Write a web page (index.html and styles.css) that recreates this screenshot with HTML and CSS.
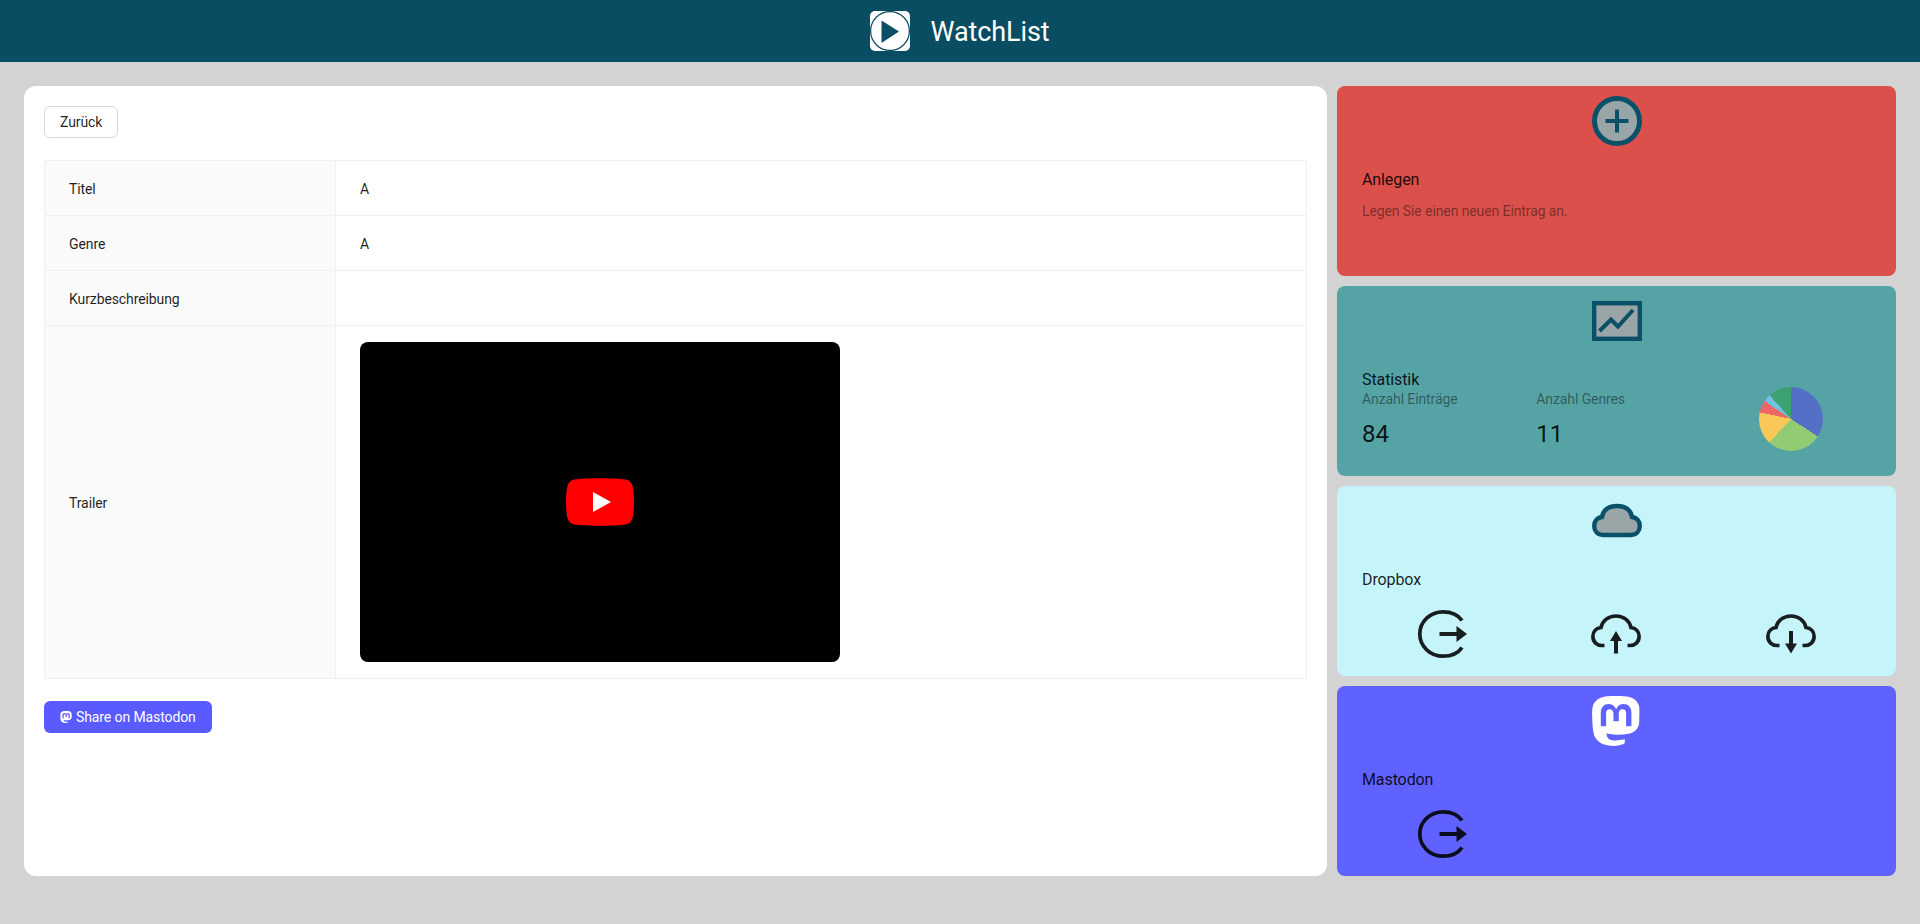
FILE: index.html
```html
<!DOCTYPE html>
<html lang="de">
<head>
    <meta charset="UTF-8">
    <title>WatchList</title>
    <link rel="stylesheet" href="styles.css">
</head>
<body>
<header class="topbar">
    <svg class="logo" viewBox="0 0 40 40">
        <rect width="40" height="40" rx="5" fill="#fff"/>
        <circle cx="20" cy="20" r="19.4" fill="none" stroke="#0a4a5f" stroke-width="1.200"/>
        <path d="M11.500 9.500 29 20.500 11.500 32Z" fill="#0a4f66"/>
    </svg>
    <span class="brand">WatchList</span>
</header>

<main class="page">
    <section class="details">
        <button type="button" class="btn">Zurück</button>

        <table class="info">
            <tr>
                <th>Titel</th>
                <td>A</td>
            </tr>
            <tr>
                <th>Genre</th>
                <td>A</td>
            </tr>
            <tr>
                <th>Kurzbeschreibung</th>
                <td></td>
            </tr>
            <tr class="trailer-row">
                <th>Trailer</th>
                <td>
                    <div class="trailer">
                        <svg class="yt" viewBox="0 0 68 48">
                            <path d="M66.500 7.700c-.8-2.900-3-5.200-5.900-6C55.300.2 34 .2 34 .2S12.700.2 7.400 1.700c-2.900.8-5.100 3.100-5.900 6C0 13 0 24 0 24s0 11 1.500 16.300c.8 2.900 3 5.200 5.900 6C12.700 47.800 34 47.800 34 47.800s21.300 0 26.600-1.500c2.900-.8 5.100-3.100 5.900-6C68 35 68 24 68 24s0-11-1.500-16.300z" fill="#f00"/>
                            <path d="M27 14v20l18-10z" fill="#fff"/>
                        </svg>
                    </div>
                </td>
            </tr>
        </table>

        <button type="button" class="btn btn-share">
            <svg class="btn-icon" viewBox="0 0 24 24"><use href="#mastodon"/></svg>
            Share on Mastodon
        </button>
    </section>

    <aside class="cards">
        <div class="card card-red">
            <div class="card-icon">
                <svg viewBox="0 0 50 50">
                    <circle cx="25" cy="25" r="22.500" fill="#9aa5a8" stroke="#0a5068" stroke-width="5"/>
                    <path d="M13.500 25h23M25 13.500v23" fill="none" stroke="#0a5068" stroke-width="4"/>
                </svg>
            </div>
            <h3 class="card-title">Anlegen</h3>
            <p class="card-text">Legen Sie einen neuen Eintrag an.</p>
        </div>

        <div class="card card-teal">
            <div class="card-icon">
                <svg viewBox="0 0 50 50">
                    <rect x="2.200" y="7.200" width="45.600" height="35.600" fill="#9aa5a8" stroke="#0a5068" stroke-width="4.400"/>
                    <path d="M7.500 35 19 23.500 26 30.500 41 14" fill="none" stroke="#0a5068" stroke-width="4"/>
                </svg>
            </div>
            <h3 class="card-title">Statistik</h3>
            <div class="card-row">
                <div class="stat">
                    <div class="stat-label">Anzahl Einträge</div>
                    <div class="stat-value">84</div>
                </div>
                <div class="stat">
                    <div class="stat-label">Anzahl Genres</div>
                    <div class="stat-value">11</div>
                </div>
                <div class="pie"></div>
            </div>
        </div>

        <div class="card card-cyan">
            <div class="card-icon">
                <svg viewBox="0 0 50 50">
                    <path d="M11 39H39C44.500 39 47.800 35 47.800 30 47.800 25 44.500 21.500 40 21 39 14 33 10 25 10 17 10 11 14 10 21 5.500 21.500 2.200 25 2.200 30 2.200 35 5.500 39 11 39Z" fill="#9aa5a8" stroke="#0a5068" stroke-width="4.400"/>
                </svg>
            </div>
            <h3 class="card-title">Dropbox</h3>
            <div class="card-row actions">
                <svg class="action" viewBox="0 0 50 50"><use href="#login"/></svg>
                <svg class="action" viewBox="0 0 50 50"><use href="#upload"/></svg>
                <svg class="action" viewBox="0 0 50 50"><use href="#download"/></svg>
            </div>
        </div>

        <div class="card card-violet">
            <div class="card-icon">
                <svg viewBox="0.600 0 24 24" class="mastodon-big"><use href="#mastodon" width="24" height="24"/></svg>
            </div>
            <h3 class="card-title">Mastodon</h3>
            <div class="card-row actions">
                <svg class="action" viewBox="0 0 50 50"><use href="#login"/></svg>
            </div>
        </div>
    </aside>
</main>

<svg class="sprites">
    <symbol id="mastodon" viewBox="0 0 24 24">
        <path fill="currentColor" d="M23.268 5.313c-.35-2.578-2.617-4.610-5.304-5.004C17.510.242 15.792 0 11.813 0h-.03c-3.980 0-4.835.242-5.288.309C3.882.692 1.496 2.518.917 5.127.640 6.412.610 7.837.661 9.143c.074 1.874.088 3.745.260 5.611.118 1.240.325 2.470.620 3.680.550 2.237 2.777 4.098 4.960 4.857 2.336.792 4.849.923 7.256.380.265-.061.527-.132.786-.213.585-.184 1.270-.390 1.774-.753a.057.057 0 0 0 .023-.043v-1.809a.052.052 0 0 0-.020-.041.053.053 0 0 0-.046-.010 20.282 20.282 0 0 1-4.709.545c-2.730 0-3.463-1.284-3.674-1.818a5.593 5.593 0 0 1-.319-1.433.053.053 0 0 1 .066-.054c1.517.363 3.072.546 4.632.546.376 0 .750 0 1.125-.010 1.570-.044 3.224-.124 4.768-.422.038-.008.077-.015.110-.024 2.435-.464 4.753-1.920 4.989-5.604.008-.145.030-1.520.030-1.670.002-.512.167-3.630-.024-5.545zm-3.748 9.195h-2.561V8.290c0-1.309-.550-1.976-1.670-1.976-1.230 0-1.846.790-1.846 2.350v3.403h-2.546V8.663c0-1.560-.617-2.350-1.848-2.350-1.112 0-1.668.668-1.670 1.977v6.218H4.822V8.102c0-1.310.337-2.350 1.011-3.120.696-.770 1.608-1.164 2.740-1.164 1.311 0 2.302.500 2.962 1.498l.638 1.060.638-1.060c.660-.999 1.650-1.498 2.960-1.498 1.130 0 2.043.395 2.740 1.164.675.770 1.012 1.810 1.012 3.120z"/>
    </symbol>
    <symbol id="login" viewBox="0 0 50 50">
        <path d="M45 11.500C41 5.500 33.500 2.800 26 2.800 13.500 2.800 2.800 12.500 2.800 25S13.500 47.200 26 47.200C33.500 47.200 41 44.500 45 38.500" fill="none" stroke="currentColor" stroke-width="3.700"/>
        <path d="M22.500 23h17v-6L50 25l-10.500 8v-6h-17z" fill="currentColor"/>
    </symbol>
    <symbol id="upload" viewBox="0 0 50 50">
        <path d="M13.500 36.500H11C6 36.500 1.900 33 1.900 27.500 1.900 22.500 5.500 19 10 18.500 11.500 11.500 17.500 7 25 7 32.500 7 38.500 11.500 40 18.500 44.500 19 48.100 22.500 48.100 27.500 48.100 33 44 36.500 39 36.500H36.500" fill="none" stroke="currentColor" stroke-width="3.700"/>
        <path d="M25 22 31 32H27V44.500H23V32H19z" fill="currentColor"/>
    </symbol>
    <symbol id="download" viewBox="0 0 50 50">
        <path d="M13.500 36.500H11C6 36.500 1.900 33 1.900 27.500 1.900 22.500 5.500 19 10 18.500 11.500 11.500 17.500 7 25 7 32.500 7 38.500 11.500 40 18.500 44.500 19 48.100 22.500 48.100 27.500 48.100 33 44 36.500 39 36.500H36.500" fill="none" stroke="currentColor" stroke-width="3.700"/>
        <path d="M25 44.500 31 34.500H27V22H23V34.500H19z" fill="currentColor"/>
    </symbol>
</svg>
</body>
</html>
```
FILE: styles.css
```css
* {
    box-sizing: border-box;
}

body {
    margin: 0;
    height: 924px;
    overflow: hidden;
    background: #d3d3d3;
    font-family: Roboto, sans-serif;
    font-size: 14px;
    letter-spacing: -0.1px;
    color: rgba(0, 0, 0, 0.88);
}

.sprites {
    display: none;
}

.topbar {
    height: 62px;
    display: flex;
    justify-content: center;
    align-items: center;
    gap: 20px;
    background: #094d63;
    color: #fff;
}

.logo {
    width: 40px;
    height: 40px;
}

.brand {
    font-size: 27px;
    padding-top: 1px;
}

.page {
    display: grid;
    grid-template-columns: 1303px 559px;
    gap: 10px;
    padding: 24px 24px 0;
}

.details {
    height: 790px;
    padding: 20px;
    background: #fff;
    border-radius: 12px;
}

.btn {
    display: inline-flex;
    align-items: center;
    height: 32px;
    padding: 0 15px;
    background: #fff;
    border: 1px solid #d9d9d9;
    border-radius: 6px;
    font: inherit;
    letter-spacing: inherit;
    color: inherit;
    cursor: pointer;
}

.btn-share {
    display: flex;
    gap: 4px;
    padding: 0 16px;
    background: #595aff;
    border: none;
    color: #fff;
}

.btn-icon {
    width: 12px;
    height: 12px;
}

.info {
    width: 1263px;
    margin: 22px 0;
    border-collapse: collapse;
    table-layout: fixed;
}

.info th,
.info td {
    height: 55px;
    padding: 2px 24px 0;
    border: 1px solid #f0f0f0;
    text-align: left;
    font-weight: 400;
}

.info th {
    width: 291px;
    background: #fafafa;
}

.trailer-row td {
    padding: 16px 24px;
}

.trailer {
    width: 480px;
    height: 320px;
    display: flex;
    justify-content: center;
    align-items: center;
    background: #000;
    border-radius: 8px;
}

.yt {
    width: 68px;
    height: 48px;
}

.cards {
    display: grid;
    grid-template-rows: repeat(4, 190px);
    gap: 10px;
}

.card {
    padding: 10px 25px 0;
    border-radius: 8px;
}

.card-red {
    background: #db504a;
}

.card-teal {
    background: #56a3a6;
}

.card-cyan {
    background: #c6f4fb;
}

.card-violet {
    background: #6062ff;
}

.card-icon {
    height: 50px;
    margin-bottom: 23px;
    text-align: center;
}

.card-icon svg {
    width: 50px;
    height: 50px;
}

.mastodon-big {
    color: #fff;
}

.card-title {
    margin: 0;
    font-size: 16px;
    font-weight: 400;
    line-height: 22px;
}

.card-text {
    margin: 9px 0 0;
    line-height: 22px;
    color: rgba(0, 0, 0, 0.45);
}

.card-row {
    display: grid;
    grid-template-columns: repeat(3, 1fr);
    margin: 0 -7px;
}

.stat {
    padding-left: 7px;
}

.stat-label {
    line-height: 16px;
    color: rgba(0, 0, 0, 0.45);
}

.stat-value {
    margin-top: 11px;
    font-size: 24px;
    line-height: 32px;
}

.pie {
    width: 64px;
    height: 64px;
    margin: -4px auto 0;
    border-radius: 50%;
    background: conic-gradient(#5470c6 0 123deg, #91cc75 0 223deg, #fac858 0 282deg, #ee6666 0 304deg, #73c0de 0 318deg, #3ba272 0 360deg);
}

.actions {
    margin-top: 18px;
    justify-items: center;
}

.action {
    width: 50px;
    height: 50px;
}
```
